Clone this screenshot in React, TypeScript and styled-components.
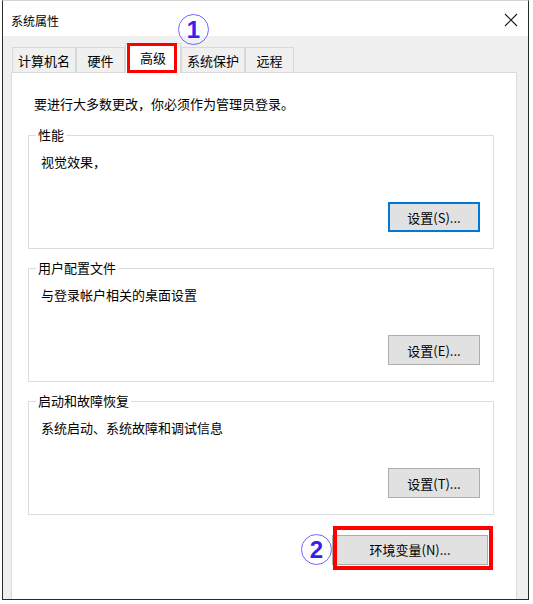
import React from "react";
import styled, { createGlobalStyle } from "styled-components";

const GlobalStyle = createGlobalStyle`
  html, body {
    margin: 0;
    padding: 0;
    background: #fff;
  }
  body {
    font-family: "Noto Sans CJK SC", "Microsoft YaHei", sans-serif;
    font-size: 13px;
    color: #000;
  }
  * {
    box-sizing: border-box;
  }
`;

const Window = styled.div`
  position: relative;
  margin-left: 2px;
  width: 527px;
  height: 600px;
  display: flex;
  flex-direction: column;
  background: #f0f0f0;
  border: 1px solid #2b2b2b;
  border-top-color: #d4d4d4;
`;

const TitleBar = styled.div`
  flex: none;
  height: 35px;
  display: flex;
  align-items: center;
  justify-content: space-between;
  padding: 3px 10px 0 8px;
  background: #fff;
  font-size: 12px;
`;

const Body = styled.div`
  flex: 1;
  min-height: 0;
  display: flex;
  flex-direction: column;
  padding: 7px 11px 0 8px;
`;

const TabStrip = styled.div`
  flex: none;
  display: flex;
  align-items: flex-end;
  height: 29px;
  padding-left: 1px;
`;

const Tab = styled.div<{ $active?: boolean; $wide?: boolean }>`
  position: relative;
  display: flex;
  align-items: center;
  justify-content: center;
  width: ${(p) => (p.$active ? 56 : p.$wide ? 64 : 49)}px;
  height: ${(p) => (p.$active ? 30 : 25)}px;
  margin-bottom: ${(p) => (p.$active ? -1 : 0)}px;
  z-index: ${(p) => (p.$active ? 1 : 0)};
  background: ${(p) => (p.$active ? "#fff" : "#f0f0f0")};
  border: 1px solid #d9d9d9;
  border-bottom: none;
  padding-bottom: ${(p) => (p.$active ? 3 : 0)}px;
`;

const Panel = styled.div`
  flex: 1;
  display: flex;
  flex-direction: column;
  background: #fff;
  border: 1px solid #d9d9d9;
  border-bottom: none;
  padding: 22px 22px 0 16px;
`;

const Intro = styled.div`
  padding-left: 6px;
  line-height: 18px;
  margin-bottom: 13px;
`;

const Groups = styled.div`
  display: flex;
  flex-direction: column;
  gap: 10px;
`;

const Group = styled.fieldset`
  margin: 0;
  min-width: 0;
  padding: 9px 13px 16px 7px;
  border: 1px solid #dcdcdc;
`;

const Legend = styled.legend`
  padding: 0 2px;
  line-height: 18px;
`;

const Desc = styled.div`
  margin-left: 5px;
  line-height: 18px;
`;

const ButtonRow = styled.div`
  display: flex;
  justify-content: flex-end;
  margin-top: 31px;
`;

const Button = styled.button<{ $focused?: boolean; $width?: number }>`
  width: ${(p) => p.$width ?? 92}px;
  height: 30px;
  padding: 0;
  font-family: inherit;
  font-size: 13px;
  color: #000;
  background: #e1e1e1;
  border: ${(p) => (p.$focused ? "2px solid #0078d7" : "1px solid #adadad")};
`;

const Footer = styled.div`
  display: flex;
  justify-content: flex-end;
  align-items: center;
  margin-top: 19px;
  padding-right: 6px;
`;

const Marked = styled.div`
  position: relative;
  display: flex;
`;

const Highlight = styled.span<{ $stroke: number }>`
  position: absolute;
  border: ${(p) => p.$stroke}px solid #ff0000;
  pointer-events: none;
`;

const TabMark = styled(Highlight)`
  left: 1px;
  top: -1px;
  width: 50px;
  height: 30px;
`;

const ButtonMark = styled(Highlight)`
  left: 1px;
  top: -9px;
  width: 160px;
  height: 44px;
`;

const Step = styled.span`
  display: flex;
  align-items: center;
  justify-content: center;
  width: 31px;
  height: 31px;
  border-radius: 50%;
  border: 1.5px solid #6f66ff;
  color: #3322ee;
  font-family: "Liberation Sans", Arial, sans-serif;
  font-weight: bold;
  font-size: 24px;
  line-height: 1;
  background: transparent;
`;

const FloatingStep = styled(Step)`
  position: absolute;
  left: 175px;
  top: 13px;
`;

const CloseIcon = () => (
  <svg width="14" height="14" viewBox="0 0 14 14">
    <path d="M1 1 L13 13 M13 1 L1 13" stroke="#1a1a1a" strokeWidth="1.1" fill="none" />
  </svg>
);

const groups = [
  { title: "性能", desc: "视觉效果，", button: "设置(S)...", focused: true },
  { title: "用户配置文件", desc: "与登录帐户相关的桌面设置", button: "设置(E)..." },
  { title: "启动和故障恢复", desc: "系统启动、系统故障和调试信息", button: "设置(T)..." },
];

export default function App() {
  return (
    <>
      <GlobalStyle />
      <Window>
        <TitleBar>
          <span>系统属性</span>
          <CloseIcon />
        </TitleBar>
        <Body>
          <TabStrip>
            <Tab $wide>计算机名</Tab>
            <Tab>硬件</Tab>
            <Tab $active>
              高级
              <TabMark $stroke={3} />
            </Tab>
            <Tab $wide>系统保护</Tab>
            <Tab>远程</Tab>
          </TabStrip>
          <Panel>
            <Intro>要进行大多数更改，你必须作为管理员登录。</Intro>
            <Groups>
              {groups.map((g) => (
                <Group key={g.title}>
                  <Legend>{g.title}</Legend>
                  <Desc>{g.desc}</Desc>
                  <ButtonRow>
                    <Button $focused={g.focused}>{g.button}</Button>
                  </ButtonRow>
                </Group>
              ))}
            </Groups>
            <Footer>
              <Step>2</Step>
              <Marked>
                <Button $width={156}>环境变量(N)...</Button>
                <ButtonMark $stroke={4} />
              </Marked>
            </Footer>
          </Panel>
        </Body>
        <FloatingStep>1</FloatingStep>
      </Window>
    </>
  );
}
